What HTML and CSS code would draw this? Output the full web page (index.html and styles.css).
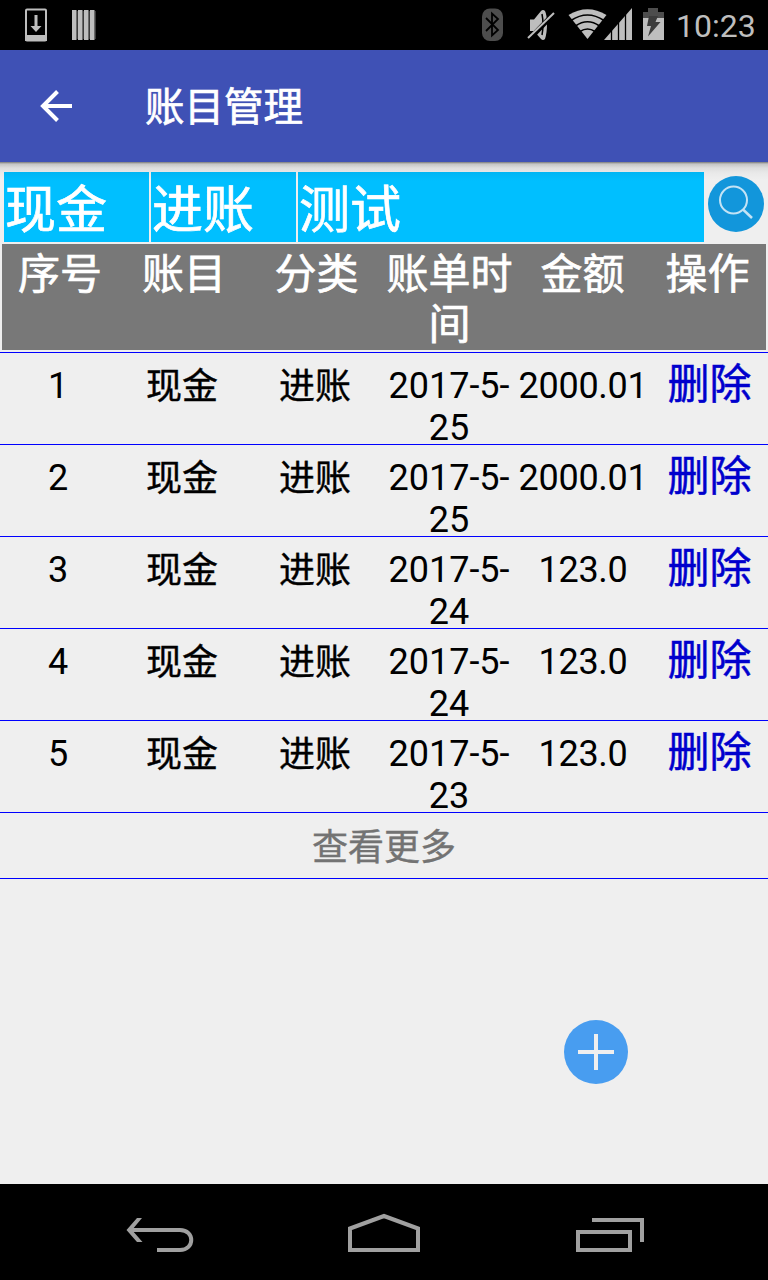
FILE: index.html
```html
<!DOCTYPE html>
<html lang="zh-CN">
<head>
<meta charset="utf-8">
<title>账目管理</title>
<link rel="stylesheet" href="styles.css">
</head>
<body>
<div class="screen">
  <header class="status">
    <svg class="status-icons" width="676" height="50" viewBox="0 0 676 50">
      <rect x="26" y="9.5" width="20" height="31" rx="1" fill="none" stroke="#bebebe" stroke-width="2"/>
      <path d="M25 35h22v6H25zM34.5 15h3v11h4L36 32l-5.500-6h4z" fill="#bebebe"/>
      <g fill="#bebebe"><path d="M72 10h4.500v30H72zM78 10h4.500v30H78zM84 10h4.500v30H84zM90 10h4.500v30H90z"/></g>
      <path d="M76.500 11h1v28h-1zM82.500 11h1v28h-1zM88.500 11h1v28h-1zM94.500 11h1v28h-1z" fill="#777"/>
      <rect x="482" y="8.500" width="21" height="32.500" rx="8" fill="#4d4d4d"/>
      <path d="M486 18l12 12-6 5.500v-22l6 5.500-12 12" fill="none" stroke="#000" stroke-width="1.800"/>
      <path d="M530 19.500h4l7-8.500q2-2 4 0 2 4 2 13t-2 15q-2 2-4 0l-7-8h-4z" fill="#bebebe"/>
      <path d="M542 14q2 10 0 21" fill="none" stroke="#000" stroke-width="1.500"/>
      <path d="M528 40.500l27-28" stroke="#000" stroke-width="5"/>
      <path d="M528 38l26-25" stroke="#bebebe" stroke-width="2"/>
      <path d="M587.500 39L568.500 15q19-11.500 38 0z" fill="#bebebe"/>
      <g fill="none" stroke="#000" stroke-width="1.700"><path d="M571 20.500q16.500-11 33 0M575.500 26q12-8.500 24 0M580 31.500q7.500-5 15 0"/></g>
      <path d="M604 40L632 8v32z" fill="#bebebe"/>
      <path d="M611.500 30v10M618.500 20v20M625.500 12v28" stroke="#000" stroke-width="1.300"/>
      <path d="M648 8h10v4h6v6h-21v-6h5z" fill="#4d4d4d"/>
      <path d="M643 18h21v22h-21z" fill="#bebebe"/>
      <path d="M649 16h9l-2.500 6h5L648 36.500l3-10.500h-4z" fill="#3c3c3c"/>
    </svg>
    <span class="clock">10:23</span>
  </header>

  <div class="appbar">
    <svg class="back" width="32" height="32" viewBox="0 0 32 32"><path d="M32 16H4M17.500 1.500L3 16l14.500 14.500" fill="none" stroke="#fff" stroke-width="4"/></svg>
    <h1 class="title">账目管理</h1>
  </div>

  <main class="content">
    <div class="filters">
      <div class="filter">现金</div>
      <div class="filter">进账</div>
      <div class="filter">测试</div>
      <svg class="search" width="56" height="56" viewBox="0 0 56 56">
        <circle cx="28" cy="28" r="28" fill="#1296db"/>
        <circle cx="25.500" cy="24" r="13.500" fill="none" stroke="#c3e3f5" stroke-width="2"/>
        <path d="M35 33.500l9 8.500" stroke="#c3e3f5" stroke-width="2.500"/>
      </svg>
    </div>
    <div class="thead">
      <span>序号</span><span>账目</span><span>分类</span><span>账单时间</span><span>金额</span><span>操作</span>
    </div>
    <div class="rows">
      <div class="row"><span>1</span><span class="label">现金</span><span class="label">进账</span><span class="date">2017-5-<br>25</span><span class="amount">2000.01</span><span class="delete">删除</span></div>
      <div class="row"><span>2</span><span class="label">现金</span><span class="label">进账</span><span class="date">2017-5-<br>25</span><span class="amount">2000.01</span><span class="delete">删除</span></div>
      <div class="row"><span>3</span><span class="label">现金</span><span class="label">进账</span><span class="date">2017-5-<br>24</span><span class="amount">123.0</span><span class="delete">删除</span></div>
      <div class="row"><span>4</span><span class="label">现金</span><span class="label">进账</span><span class="date">2017-5-<br>24</span><span class="amount">123.0</span><span class="delete">删除</span></div>
      <div class="row"><span>5</span><span class="label">现金</span><span class="label">进账</span><span class="date">2017-5-<br>23</span><span class="amount">123.0</span><span class="delete">删除</span></div>
      <div class="more">查看更多</div>
    </div>
    <svg class="add" width="64" height="64" viewBox="0 0 64 64">
      <circle cx="32" cy="32" r="32" fill="#489df0"/>
      <path d="M14 32h36M32 14v36" stroke="#efefef" stroke-width="4"/>
    </svg>
  </main>

  <nav class="navbar">
    <svg width="768" height="96" viewBox="0 0 768 96" fill="none" stroke="#a0a0a0" stroke-width="4">
      <path d="M157 66h23c15 0 15-20 0-20h-49"/>
      <path d="M142 34h-5l-10.500 12L137 58h5.500L132 46z" fill="#a0a0a0" stroke="none"/>
      <path d="M350 66V44.500L384 32l34 12.500V66z"/>
      <path d="M578 48h52v18h-52zM592 36h50v22"/>
    </svg>
  </nav>
</div>
</body>
</html>
```

FILE: styles.css
```css
* { box-sizing: border-box; }
body { margin: 0; }

.screen {
  display: flex;
  flex-direction: column;
  width: 768px;
  height: 1280px;
  overflow: hidden;
  background: #efefef;
  color: #000;
  font-family: Roboto, "Noto Sans CJK SC", sans-serif;
}

.status {
  display: flex;
  flex: 0 0 50px;
  height: 50px;
  background: #000;
}
.status-icons { display: block; }
.clock {
  padding-top: 2px;
  font-size: 32px;
  line-height: 48px;
  color: #bebebe;
}

.appbar {
  display: flex;
  flex: 0 0 112px;
  align-items: center;
  gap: 73px;
  padding-left: 40px;
  background: #3f51b5;
}
.title {
  margin: 0;
  padding-top: 4px;
  font-size: 39.5px;
  font-weight: 400;
  line-height: 56px;
  color: #fff;
  -webkit-text-stroke: 0.7px;
}

.content {
  display: flex;
  flex: 1;
  flex-direction: column;
  padding-top: 10px;
  background: linear-gradient(#7a7a7a 0, #c5c5c5 2px, #dedede 6px, #e9e9e9 11px, #efefef 18px);
}
.filters {
  display: grid;
  grid-template-columns: 145px 145px 406px 56px;
  column-gap: 2px;
  height: 70px;
  padding-left: 4px;
}
.filter {
  padding: 8px 0 0 1px;
  background: linear-gradient(#00b5f3 0, #00bfff 9px);
  font-size: 51px;
  line-height: 62px;
  color: #fff;
  -webkit-text-stroke: 0.7px;
}
.search { margin: 4px 0 0 2px; }

.thead {
  display: grid;
  grid-template-columns: 116px 132px 133px 133px 133px 117px;
  height: 106px;
  margin: 2px 2px 0;
  padding-top: 6px;
  background: #787878;
  font-size: 42px;
  line-height: 50px;
  color: #fff;
  text-align: center;
  -webkit-text-stroke: 0.7px;
}

.rows {
  margin-top: 2px;
  border-top: 1px solid #00f;
}
.row {
  display: grid;
  grid-template-columns: 116px 132px 134px 133px 133px 120px;
  height: 92px;
  padding-top: 12px;
  border-bottom: 1px solid #00f;
  font-size: 36px;
  line-height: 42px;
  text-align: center;
}
.label {
  padding-top: 1px;
  -webkit-text-stroke: 0.4px;
}
.date { padding-left: 1px; }
.amount {
  padding-left: 3px;
  letter-spacing: -0.3px;
}
.delete {
  margin-top: -1px;
  padding-left: 3px;
  font-size: 42px;
  color: #0000cd;
  -webkit-text-stroke: 0.5px;
}
.more {
  height: 66px;
  padding-top: 2px;
  border-bottom: 1px solid #00f;
  font-size: 36px;
  line-height: 66px;
  color: #737373;
  text-align: center;
  -webkit-text-stroke: 0.4px;
}
.add { margin: 141px 0 0 564px; }

.navbar {
  flex: 0 0 96px;
  background: #000;
}
.navbar svg { display: block; }
```
